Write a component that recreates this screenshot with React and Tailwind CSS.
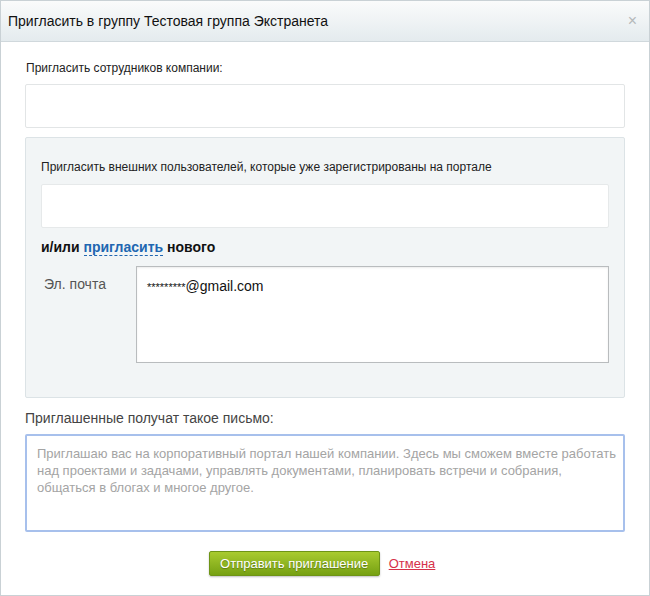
export default function App() {
  return (
    <div className="flex h-[596px] w-[650px] flex-col border border-[#c9d1d5] bg-white font-['Liberation_Sans',Arial,sans-serif] text-[#222]">
      <div className="flex h-[41px] shrink-0 items-center justify-between border-b border-[#d0d8dc] bg-gradient-to-b from-[#fafbfb] to-[#e4ebee] pl-[7px] pr-[12px]">
        <span className="text-[14px] text-[#111]">Пригласить в группу Тестовая группа Экстранета</span>
        <span className="text-[16px] leading-none text-[#b5b9bb]">×</span>
      </div>

      <div className="flex flex-col px-[24px]">
        <p className="mt-[18px] pl-[1px] text-[12px] leading-[16px] text-[#222]">Пригласить сотрудников компании:</p>
        <div className="mt-[8px] h-[44px] rounded-[2px] border border-[#e2e5e6] bg-white" />

        <div className="mt-[9px] flex h-[261px] flex-col rounded-[2px] border border-[#dce3e6] bg-[#f2f5f6] px-[15px]">
          <p className="mt-[21px] text-[12px] leading-[16px] text-[#222]">
            Пригласить внешних пользователей, которые уже зарегистрированы на портале
          </p>
          <div className="mt-[9px] h-[44px] rounded-[2px] border border-[#e6e9ea] bg-white" />
          <p className="mt-[11px] text-[14px] font-bold leading-[16px] text-[#111]">
            и/или{" "}
            <span className="border-b border-dashed border-[#2066b1] text-[#2066b1]">пригласить</span>{" "}
            нового
          </p>
          <div className="mt-[11px] flex gap-[28px]">
            <span className="w-[67px] whitespace-nowrap pl-[3px] pt-[10px] text-[14px] leading-[16px] text-[#555]">Эл. почта</span>
            <div className="h-[97px] flex-1 border border-[#b9bcbe] bg-white pl-[10px] pt-[11px] text-[14px] leading-[16px] text-[#111] shadow-[inset_0_1px_2px_rgba(0,0,0,0.08)]">
              <span className="text-[11px]">*********</span>@gmail.com
            </div>
          </div>
        </div>

        <p className="mt-[12px] text-[14px] leading-[16px] text-[#444]">Приглашенные получат такое письмо:</p>
        <div className="mt-[8px] h-[98px] whitespace-nowrap rounded-[2px] border-2 border-[#a7c0ec] bg-white px-[10px] pt-[9px] text-[13px] leading-[17px] text-[#a4a4a4]">
          Приглашаю вас на корпоративный портал нашей компании. Здесь мы сможем вместе работать
          <br />
          над проектами и задачами, управлять документами, планировать встречи и собрания,
          <br />
          общаться в блогах и многое другое.
        </div>

        <div className="mt-[19px] flex items-center justify-center gap-[9px] pr-[6px]">
          <button
            type="button"
            className="h-[25px] w-[171px] rounded-[2px] border border-[#6e9416] bg-gradient-to-b from-[#a9cb2f] to-[#76a112] text-[13px] text-white shadow-[0_1px_2px_rgba(0,0,0,0.25)] [text-shadow:0_1px_1px_rgba(0,0,0,0.3)]"
          >
            Отправить приглашение
          </button>
          <a href="#" className="text-[13px] text-[#d6314a] underline">
            Отмена
          </a>
        </div>
      </div>
    </div>
  );
}
